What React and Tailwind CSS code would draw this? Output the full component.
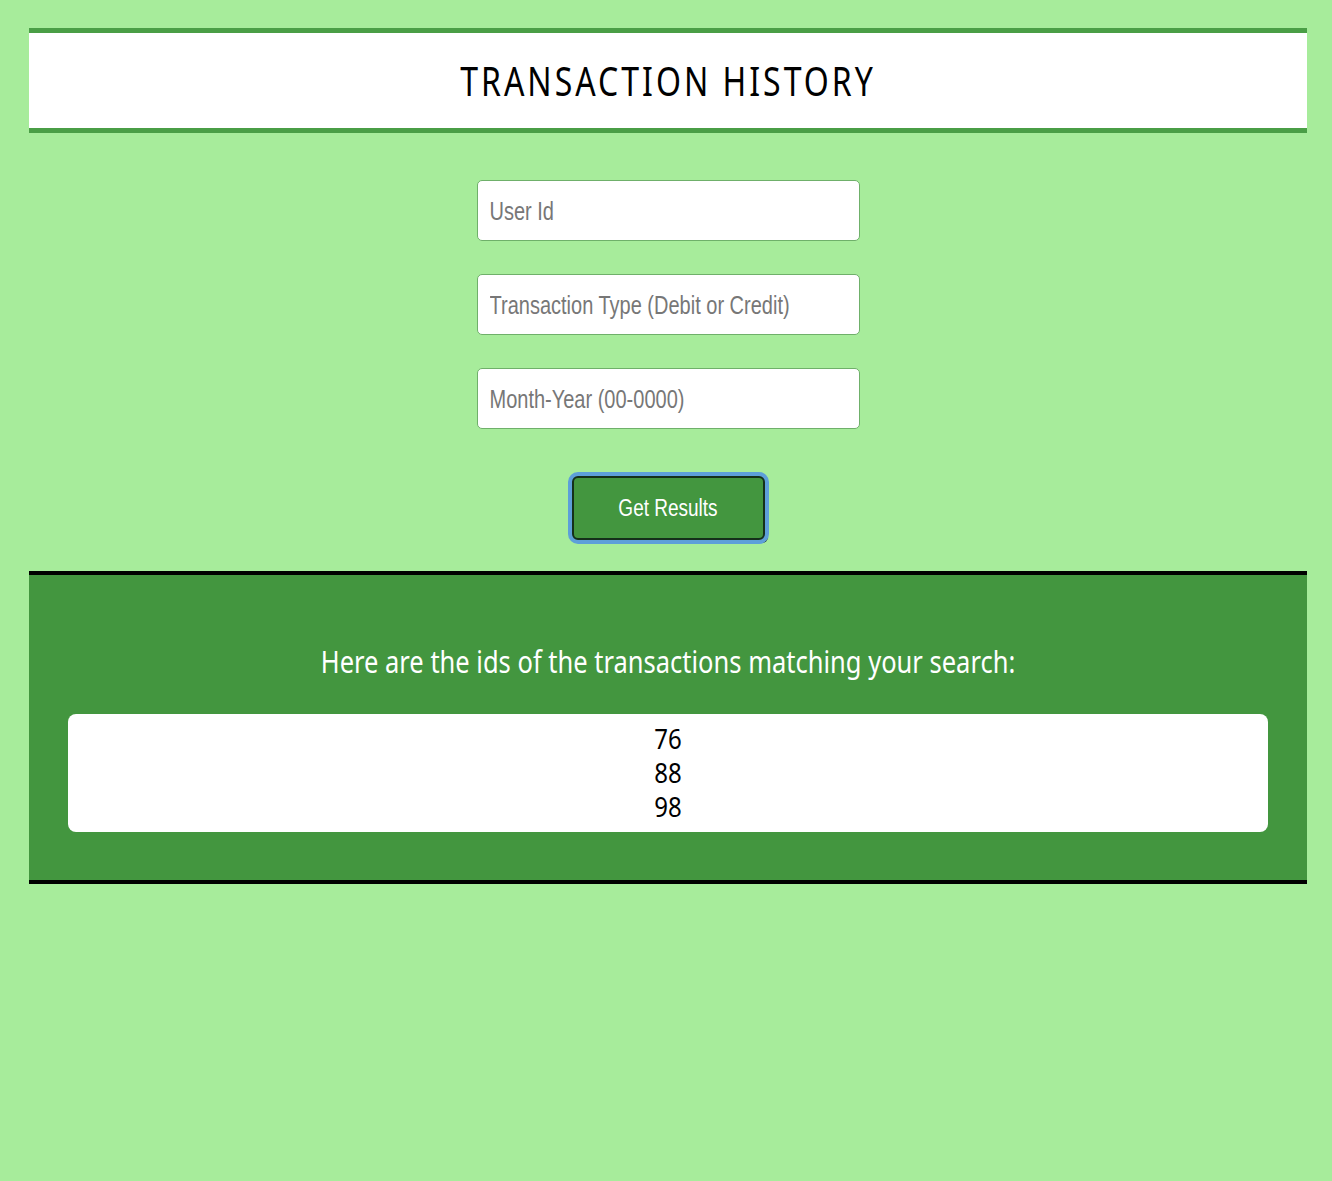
import React, { useState } from 'react';

const ids = [76, 88, 98];

const Field = ({ placeholder, value, onChange }) => (
  <div className="w-[383px] h-[61px] bg-white rounded-[5px] border border-[#6fb06a] flex items-center px-3">
    <input
      className="w-full bg-transparent outline-none text-[20px] text-gray-700 placeholder:text-[#777777] scale-y-[1.3] font-['Liberation_Sans',Arial,sans-serif]"
      placeholder={placeholder}
      value={value}
      onChange={onChange}
    />
  </div>
);

const App = () => {
  const [userId, setUserId] = useState('');
  const [type, setType] = useState('');
  const [month, setMonth] = useState('');

  return (
    <div className="min-h-screen bg-[#a7ec9b] pt-[28px] pl-[29px] pr-[25px] font-['Noto_Sans',sans-serif]">
      <div className="bg-white border-y-[5px] border-[#4a9e46] h-[105px] flex items-center justify-center">
        <h1 className="text-[32px] tracking-[3px] text-black scale-y-[1.25]">TRANSACTION HISTORY</h1>
      </div>

      <div className="flex flex-col items-center gap-[33px] mt-[47px]">
        <Field placeholder="User Id" value={userId} onChange={e => setUserId(e.target.value)} />
        <Field placeholder="Transaction Type (Debit or Credit)" value={type} onChange={e => setType(e.target.value)} />
        <Field placeholder="Month-Year (00-0000)" value={month} onChange={e => setMonth(e.target.value)} />
      </div>

      <div className="flex justify-center mt-[47px]">
        <button className="w-[193px] h-[64px] bg-[#43963f] border-2 border-[#15301a] rounded-[6px] ring-4 ring-[#5d9fd9] shadow-[3px_3px_0_#0a1a0c] text-white text-[19px] font-['Liberation_Sans',Arial,sans-serif]">
          <span className="inline-block scale-y-[1.3]">Get Results</span>
        </button>
      </div>

      <div className="mt-[31px] bg-[#43963f] border-y-4 border-black px-[39px] pt-[66px] pb-[48px]">
        <h2 className="text-center text-white text-[25.5px] leading-[40px] scale-y-[1.2]">
          Here are the ids of the transactions matching your search:
        </h2>
        <div className="mt-[33px] bg-white rounded-[8px] py-[8px] flex flex-col items-center">
          {ids.map(id => (
            <div key={id} className="text-[24px] leading-[34px] text-black scale-y-[1.1]">{id}</div>
          ))}
        </div>
      </div>
    </div>
  );
};

export default App;
